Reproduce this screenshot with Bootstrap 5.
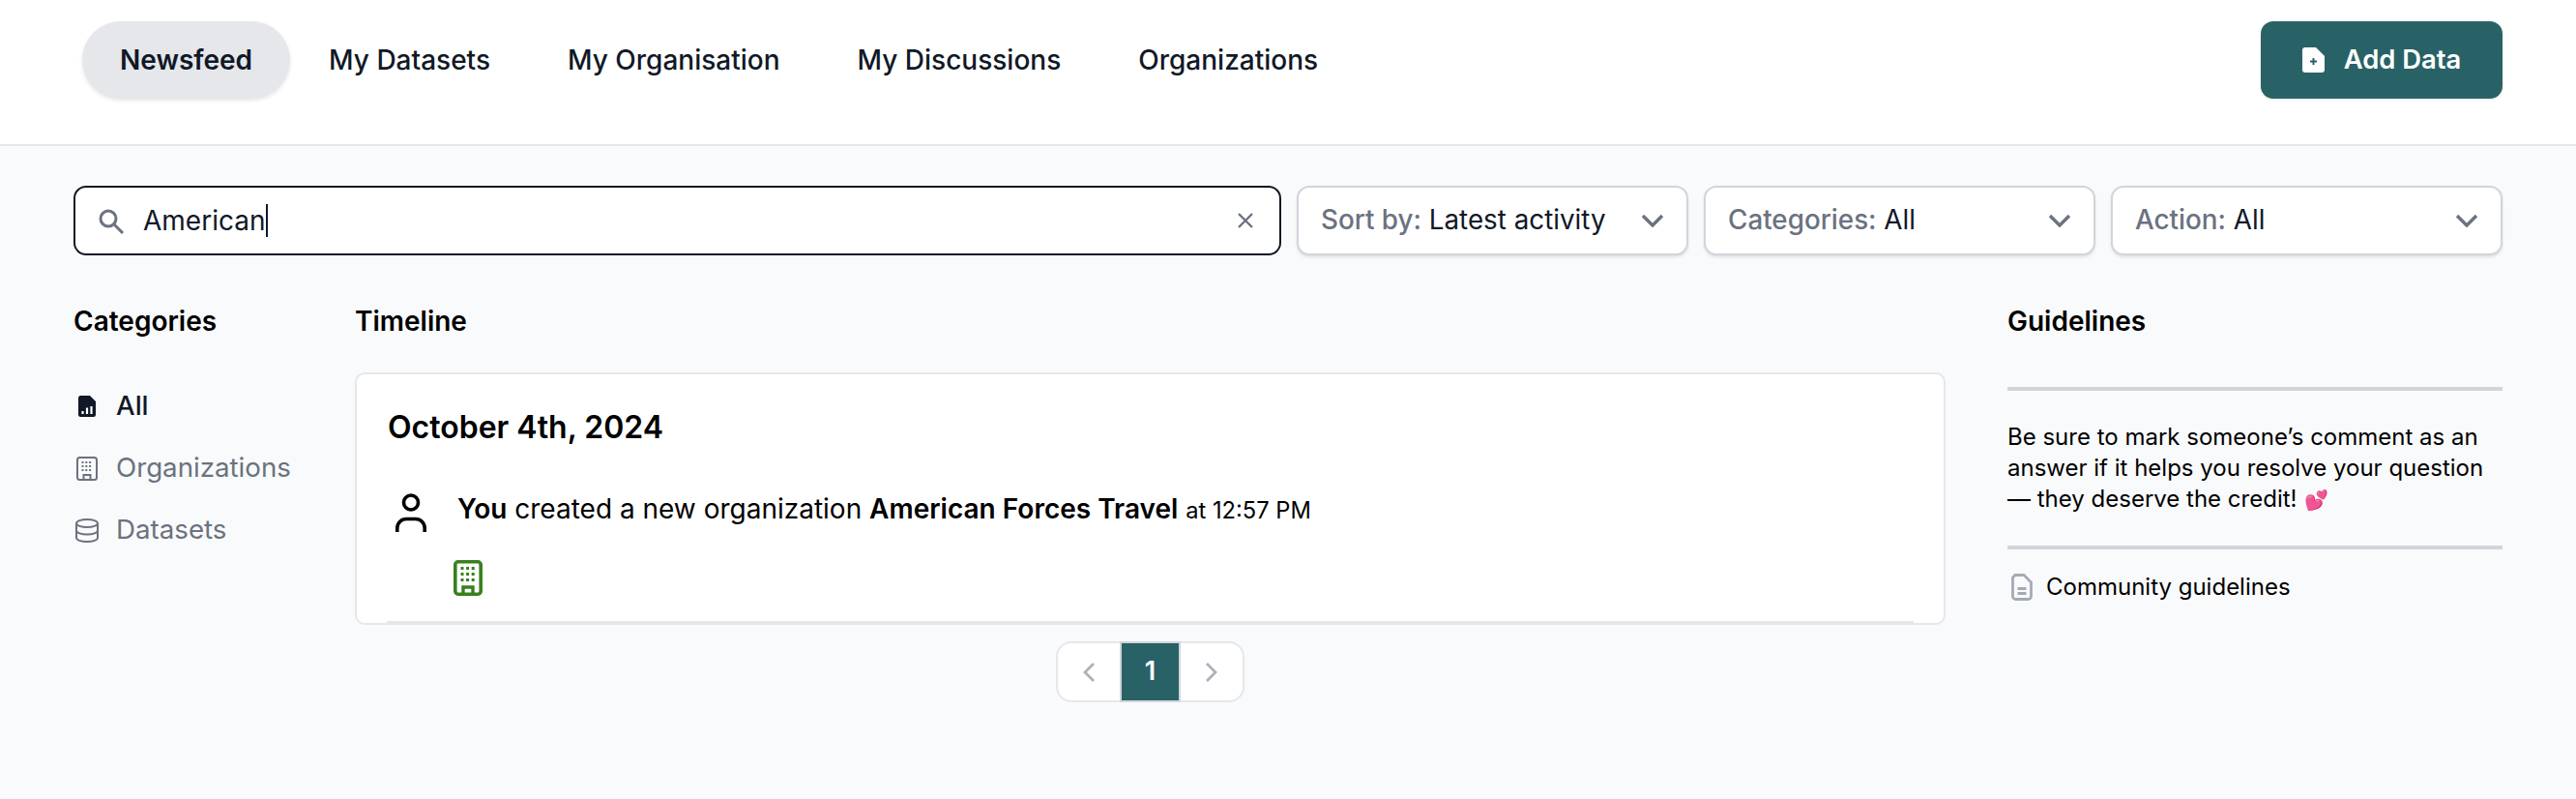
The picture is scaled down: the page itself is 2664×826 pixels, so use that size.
<!DOCTYPE html>
<html lang="en">
<head>
  <meta charset="UTF-8">
  <title>Newsfeed</title>
  <link href="https://cdn.jsdelivr.net/npm/bootstrap@5.3.0/dist/css/bootstrap.min.css" rel="stylesheet">
  <style>
    body { font-family: Inter, "Noto Sans", sans-serif; background: #f9fafb; color: #000; font-size: 26.67px; }
    .top-bar { height: 151px; background: #fff; border-bottom: 2px solid #e5e7eb; padding: 22px 76px 0 85px; }
    .top-link { height: 80px; padding: 0 40px; border-radius: 40px; color: #111827; font-size: 28px; font-weight: 500; text-decoration: none; display: flex; align-items: center; }
    .top-link.current { background: #e5e7eb; font-weight: 600; box-shadow: 0 2px 4px rgba(0,0,0,.1); padding: 0 39px; }
    .add-btn { height: 80px; width: 250px; background: #296266; color: #fff; border-radius: 13px; font-size: 27.4px; font-weight: 600; border: 0; gap: 20px; box-shadow: 0 1px 3px rgba(0,0,0,.1); }
    .filter-bar { padding: 41px 76px 0; gap: 16px; }
    .search-box { height: 72px; flex: 1 1 auto; background: #fff; border: 2px solid #111827; border-radius: 13px; padding: 0 26px 0 23px; font-size: 28px; color: #111827; }
    .search-text { margin-left: 19px; }
    .caret-line { display: inline-block; width: 2px; height: 34px; background: #111827; margin-left: 1px; }
    .filter-pick { height: 72px; width: 405px; flex: none; background: #fff; border: 2px solid #d1d5db; border-radius: 13px; padding: 0 23px; font-size: 27.8px; color: #111827; box-shadow: 0 2px 3px rgba(0,0,0,.1); }
    .filter-pick span { color: #6b7280; font-weight: 500; }
    .main-row { padding: 51px 76px 0; }
    .side-left { width: 291px; flex: none; }
    .center-col { width: 1645px; flex: none; }
    .side-right { width: 512px; flex: none; margin-left: 64px; }
    .col-title { font-size: 28px; font-weight: 600; line-height: 34px; margin: 0; color: #000; }
    .cat-list { margin-top: 39px; }
    .cat-item { height: 64px; gap: 16px; font-size: 27.7px; color: #6b7280; font-weight: 400; }
    .cat-item.current { color: #111827; font-weight: 500; }
    .cat-slot { width: 28px; flex: none; }
    .feed-card { margin-top: 36px; height: 261px; background: #fff; border: 2px solid #e5e7eb; border-radius: 10px; padding: 35px 32px 0; position: relative; }
    .feed-date { font-size: 32px; font-weight: 600; line-height: 40px; margin: 0; }
    .feed-row { margin-top: 45px; gap: 32px; font-size: 28px; line-height: 38px; }
    .feed-row small { font-size: 23.7px; }
    .feed-person { margin: 3px 0 0 8px; flex: none; }
    .feed-org { margin: 29px 0 0 68px; display: block; }
    .feed-rule { position: absolute; left: 31px; right: 31px; bottom: 0; height: 2px; background: #e5e7eb; }
    .pager-wrap { margin-top: 17px; }
    .pager-box { height: 63px; background: #fff; border: 2px solid #e5e7eb; border-radius: 16px; }
    .pager-end { width: 64px; height: 100%; }
    .pager-num { width: 63px; height: calc(100% + 4px); background: #296266; color: #fff; font-size: 27px; font-weight: 600; border: 2px solid #d1d5db; }
    .guide-rule { height: 4px; background: #d1d5db; margin: 0; }
    .guide-rule.first-rule { margin-top: 51px; }
    .guide-text { font-size: 24px; line-height: 32px; margin: 32px 0; color: #000; }
    .guide-emoji { font-size: 20px; line-height: 1; margin-left: 1px; }
    .guide-link { margin: 23px 0 0 4px; gap: 14px; font-size: 24px; line-height: 32px; }
  </style>
</head>
<body>
  <div class="top-bar d-flex justify-content-between align-items-start">
    <nav class="d-flex">
      <a href="#" class="top-link current">Newsfeed</a>
      <a href="#" class="top-link">My Datasets</a>
      <a href="#" class="top-link">My Organisation</a>
      <a href="#" class="top-link">My Discussions</a>
      <a href="#" class="top-link">Organizations</a>
    </nav>
    <button class="add-btn d-flex align-items-center justify-content-center">
      <svg width="23" height="26" viewBox="0 0 23 26"><path fill="#fff" d="M3 0h11l9 9v14a3 3 0 0 1-3 3H3a3 3 0 0 1-3-3V3a3 3 0 0 1 3-3z"/><path stroke="#296266" stroke-width="2" d="M11.500 11v7M8 14.500h7"/></svg>
      Add Data
    </button>
  </div>

  <div class="filter-bar d-flex">
    <div class="search-box d-flex align-items-center">
      <svg width="28" height="27" viewBox="0 0 28 27" fill="none" stroke="#6b7280" stroke-width="3"><circle cx="11" cy="11" r="8"/><path d="M17 17l9 9"/></svg>
      <div class="search-text flex-grow-1 d-flex align-items-center">American<i class="caret-line"></i></div>
      <svg width="18" height="18" viewBox="0 0 18 18" stroke="#6b7280" stroke-width="2.400"><path d="M2 2l14 14M16 2L2 16"/></svg>
    </div>
    <div class="filter-pick d-flex align-items-center justify-content-between">
      <div><span>Sort by:</span> Latest activity</div>
      <svg width="24" height="14" viewBox="0 0 24 14" fill="none" stroke="#6b7280" stroke-width="3.400"><path d="M2 2l10 10L22 2"/></svg>
    </div>
    <div class="filter-pick d-flex align-items-center justify-content-between">
      <div><span>Categories:</span> All</div>
      <svg width="24" height="14" viewBox="0 0 24 14" fill="none" stroke="#6b7280" stroke-width="3.400"><path d="M2 2l10 10L22 2"/></svg>
    </div>
    <div class="filter-pick d-flex align-items-center justify-content-between">
      <div><span>Action:</span> All</div>
      <svg width="24" height="14" viewBox="0 0 24 14" fill="none" stroke="#6b7280" stroke-width="3.400"><path d="M2 2l10 10L22 2"/></svg>
    </div>
  </div>

  <div class="main-row d-flex">
    <aside class="side-left">
      <h2 class="col-title">Categories</h2>
      <div class="cat-list">
        <div class="cat-item current d-flex align-items-center">
          <div class="cat-slot d-flex justify-content-center">
            <svg width="18" height="22" viewBox="0 0 18 22"><path fill="#111827" d="M2.500 0H12l6 6v13.500a2.500 2.500 0 0 1-2.500 2.500h-13A2.500 2.500 0 0 1 0 19.500v-17A2.500 2.500 0 0 1 2.500 0z"/><path stroke="#fff" stroke-width="2.200" d="M4.500 19v-3M9 19v-6.500M13.500 19v-8"/></svg>
          </div>
          All
        </div>
        <div class="cat-item d-flex align-items-center">
          <div class="cat-slot d-flex justify-content-center">
            <svg width="22" height="25" viewBox="0 0 22 25"><rect x="1" y="1" width="20" height="23" rx="2.500" fill="none" stroke="#6b7280" stroke-width="2"/><path stroke="#6b7280" stroke-width="1.800" stroke-dasharray="2 1.800" d="M5.500 6h11M5.500 10h11M5.500 14h11"/><path fill="none" stroke="#6b7280" stroke-width="2" d="M7.500 24v-5h7v5"/></svg>
          </div>
          Organizations
        </div>
        <div class="cat-item d-flex align-items-center">
          <div class="cat-slot d-flex justify-content-center">
            <svg width="24" height="25" viewBox="0 0 24 25" fill="none" stroke="#6b7280" stroke-width="2"><ellipse cx="12" cy="5" rx="11" ry="4"/><path d="M1 5v15c0 2.200 4.900 4 11 4s11-1.800 11-4V5M1 12.500c0 2.200 4.900 4 11 4s11-1.800 11-4"/></svg>
          </div>
          Datasets
        </div>
      </div>
    </aside>

    <main class="center-col">
      <h2 class="col-title">Timeline</h2>
      <div class="feed-card">
        <h3 class="feed-date">October 4th, 2024</h3>
        <div class="feed-row d-flex align-items-start">
          <svg class="feed-person" width="32" height="40" viewBox="0 0 32 40" fill="none" stroke="#000" stroke-width="3.600"><circle cx="16" cy="9.500" r="7.500"/><path d="M1.800 40v-4a9.500 9.500 0 0 1 9.500-9.500h9.400a9.500 9.500 0 0 1 9.500 9.500v4"/></svg>
          <div><b class="fw-semibold">You</b> created a new organization <b class="fw-semibold">American Forces Travel</b> <small>at 12:57 PM</small></div>
        </div>
        <svg class="feed-org" width="30" height="37" viewBox="0 0 30 37"><rect x="1.800" y="1.800" width="26.400" height="33.400" rx="3" fill="none" stroke="#38801f" stroke-width="3.600"/><path stroke="#38801f" stroke-width="3" stroke-dasharray="3 2.600" d="M7.500 8.500h16M7.500 14.500h16M7.500 20.500h16"/><path fill="none" stroke="#38801f" stroke-width="3.400" d="M10 36v-8h10v8"/></svg>
        <div class="feed-rule"></div>
      </div>
      <div class="pager-wrap d-flex justify-content-center">
        <div class="pager-box d-flex align-items-center">
          <div class="pager-end d-flex align-items-center justify-content-center">
            <svg width="12" height="20" viewBox="0 0 12 20" fill="none" stroke="#adb1ba" stroke-width="2.800"><path d="M11 1L2 10l9 9"/></svg>
          </div>
          <div class="pager-num d-flex align-items-center justify-content-center">1</div>
          <div class="pager-end d-flex align-items-center justify-content-center">
            <svg width="12" height="20" viewBox="0 0 12 20" fill="none" stroke="#adb1ba" stroke-width="2.800"><path d="M1 1l9 9-9 9"/></svg>
          </div>
        </div>
      </div>
    </main>

    <aside class="side-right">
      <h2 class="col-title">Guidelines</h2>
      <div class="guide-rule first-rule"></div>
      <p class="guide-text">Be sure to mark someone’s comment as an answer if it helps you resolve your question — they deserve the credit! <span class="guide-emoji">💕</span></p>
      <div class="guide-rule"></div>
      <div class="guide-link d-flex align-items-center">
        <svg width="22" height="28" viewBox="0 0 22 28" fill="none" stroke="#a5abb6" stroke-width="2.800"><path d="M4 1.500h9l7.500 7.500v14.500a3 3 0 0 1-3 3H4.500a3 3 0 0 1-3-3V4z"/><path d="M6.500 15.500h9M6.500 20.500h9"/></svg>
        Community guidelines
      </div>
    </aside>
  </div>
  <script src="https://cdn.jsdelivr.net/npm/bootstrap@5.3.0/dist/js/bootstrap.bundle.min.js"></script>
</body>
</html>
